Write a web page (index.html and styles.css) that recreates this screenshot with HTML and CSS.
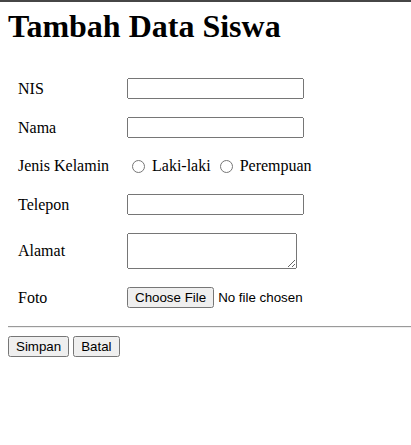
FILE: index.html
```html
<!DOCTYPE html>
<html lang="id">
<head>
<meta charset="utf-8">
<title>Tambah Data Siswa</title>
<link rel="stylesheet" href="styles.css">
</head>
<body>
<div class="topbar"></div>
<div class="page">
  <h1 class="title">Tambah Data Siswa</h1>
  <form class="form">
    <div class="grid">
      <div class="cell label">NIS</div>
      <div class="cell"><input class="text" type="text" name="nis"></div>

      <div class="cell label">Nama</div>
      <div class="cell"><input class="text" type="text" name="nama"></div>

      <div class="cell label">Jenis Kelamin</div>
      <div class="cell radios">
        <label class="opt"><input class="radio" type="radio" name="jk" value="L"> Laki-laki</label>
        <label class="opt"><input class="radio" type="radio" name="jk" value="P"> Perempuan</label>
      </div>

      <div class="cell label">Telepon</div>
      <div class="cell"><input class="text" type="text" name="telepon"></div>

      <div class="cell label">Alamat</div>
      <div class="cell"><textarea class="area" name="alamat"></textarea></div>

      <div class="cell label">Foto</div>
      <div class="cell"><input class="file" type="file" name="foto"></div>
    </div>
    <hr class="rule">
    <div class="actions">
      <button class="btn" type="submit">Simpan</button>
      <button class="btn" type="reset">Batal</button>
    </div>
  </form>
</div>
</body>
</html>
```
FILE: styles.css
```css
html, body {
  margin: 0;
  padding: 0;
  background: #fff;
}
body {
  font-family: "Liberation Serif", "Times New Roman", serif;
  font-size: 16px;
  color: #000;
}
.topbar {
  height: 2px;
  background: #464646;
}
.page {
  padding: 0 0 0 8px;
}
.title {
  font-family: "Liberation Serif", "Times New Roman", serif;
  font-size: 32px;
  font-weight: bold;
  line-height: 37px;
  margin: 6px 0 23px 0;
}
.form {
  margin: 0;
}
.grid {
  display: inline-grid;
  grid-template-columns: 107px auto;
  gap: 2px;
  padding: 2px;
}
.cell {
  padding: 8px;
  display: flex;
  align-items: center;
}
.label {
  line-height: 18px;
  white-space: nowrap;
}
.text {
  box-sizing: border-box;
  width: 177px;
  height: 21px;
  margin: 0;
  font-family: "Liberation Sans", Arial, sans-serif;
  font-size: 13.333px;
}
.area {
  box-sizing: border-box;
  width: 170px;
  height: 36px;
  margin: 0;
  display: block;
  font-family: "Liberation Mono", monospace;
  font-size: 13.333px;
}
.file {
  margin: 0;
  height: 21px;
  font-family: "Liberation Sans", Arial, sans-serif;
  font-size: 13.333px;
}
.radios {
  height: 20px;
  box-sizing: content-box;
}
.opt {
  display: inline-flex;
  align-items: center;
  margin-right: 4px;
  white-space: pre;
}
.radio {
  width: 13px;
  height: 13px;
  margin: 1px 3px 0 5px;
}
.rule {
  margin: 8px 0;
  border: 0;
  border-top: 1px solid #9a9a9a;
  border-bottom: 1px solid #eeeeee;
  height: 0;
}
.actions {
  display: flex;
  gap: 4px;
}
.btn {
  margin: 0;
  height: 21px;
  padding: 1px 6px;
  font-family: "Liberation Sans", Arial, sans-serif;
  font-size: 13.333px;
  color: #000;
}
```
